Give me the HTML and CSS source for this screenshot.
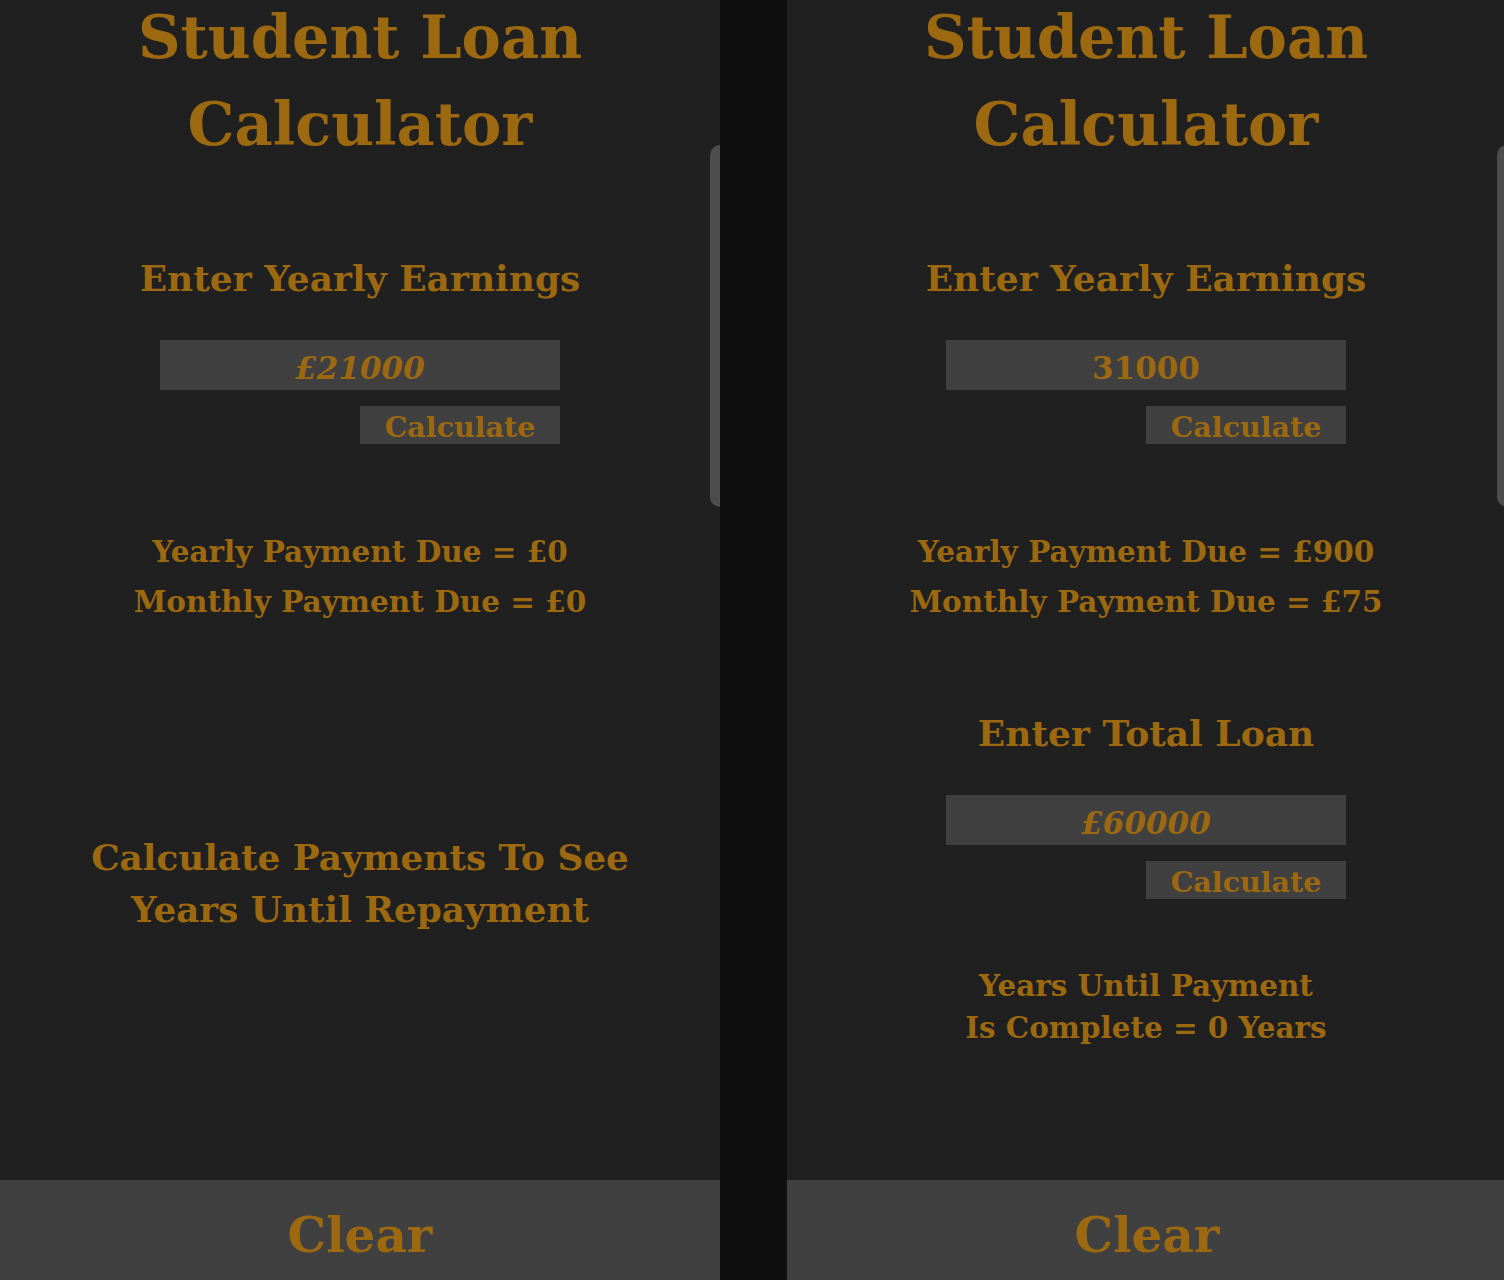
FILE: index.html
```html
<!DOCTYPE html>
<html lang="en">
<head>
<meta charset="utf-8">
<title>Student Loan Calculator</title>
<link rel="stylesheet" href="styles.css">
</head>
<body>
<div class="screens">
  <section class="screen">
    <div class="content">
      <h1 class="title">Student Loan<br>Calculator</h1>
      <h2 class="label">Enter Yearly Earnings</h2>
      <div class="field"><input class="input" type="text" placeholder="£21000"></div>
      <div class="action"><button class="calc">Calculate</button></div>
      <div class="results">
        <p>Yearly Payment Due = £0</p>
        <p>Monthly Payment Due = £0</p>
      </div>
      <p class="hint">Calculate Payments To See<br>Years Until Repayment</p>
    </div>
    <button class="clear">Clear</button>
    <div class="thumb"></div>
  </section>
  <section class="screen">
    <div class="content">
      <h1 class="title">Student Loan<br>Calculator</h1>
      <h2 class="label">Enter Yearly Earnings</h2>
      <div class="field"><input class="input" type="text" value="31000"></div>
      <div class="action"><button class="calc">Calculate</button></div>
      <div class="results">
        <p>Yearly Payment Due = £900</p>
        <p>Monthly Payment Due = £75</p>
      </div>
      <h2 class="label label-loan">Enter Total Loan</h2>
      <div class="field"><input class="input" type="text" placeholder="£60000"></div>
      <div class="action"><button class="calc">Calculate</button></div>
      <p class="years">Years Until Payment<br>Is Complete = 0 Years</p>
    </div>
    <button class="clear">Clear</button>
    <div class="thumb"></div>
  </section>
</div>
</body>
</html>
```
FILE: styles.css
```css
* { box-sizing: border-box; }
html, body { margin: 0; padding: 0; }
body {
  background: #0f0f0f;
  font-family: "DejaVu Serif", "Liberation Serif", serif;
  color: #9c6911;
  overflow: hidden;
}
.screens {
  display: flex;
  gap: 67px;
  width: 1504px;
  height: 1280px;
  overflow: hidden;
}
.screen {
  position: relative;
  flex: 0 0 720px;
  height: 1280px;
  background: #202020;
  display: flex;
  flex-direction: column;
  overflow: hidden;
}
.screen + .screen .content { margin-left: -2px; }
.content {
  flex: 1;
  display: flex;
  flex-direction: column;
  align-items: center;
}
.title {
  margin: -6px 0 0;
  font-size: 59px;
  line-height: 87px;
  font-weight: bold;
  text-align: center;
}
.label {
  margin: 88px 0 0;
  font-size: 36px;
  line-height: 44px;
  font-weight: bold;
  text-align: center;
}
.label-loan { margin-top: 84px; }
.field { margin-top: 40px; }
.input {
  display: block;
  width: 400px;
  height: 50px;
  border: 0;
  outline: 0;
  background: #404040;
  color: #9c6911;
  font-family: inherit;
  font-weight: bold;
  font-size: 31px;
  text-align: center;
  padding: 6px 0 0;
}
.input::placeholder {
  color: #9c6911;
  font-style: italic;
  opacity: 1;
}
.action {
  width: 400px;
  display: flex;
  justify-content: flex-end;
  margin-top: 16px;
}
.calc {
  width: 200px;
  height: 38px;
  border: 0;
  background: #404040;
  color: #9c6911;
  font-family: inherit;
  font-weight: bold;
  font-size: 28.5px;
  padding: 4px 0 0;
}
.results {
  margin-top: 83px;
  text-align: center;
  font-weight: bold;
  font-size: 29.5px;
  line-height: 50px;
}
.results p { margin: 0; }
.hint {
  margin: 204px 0 0;
  text-align: center;
  font-weight: bold;
  font-size: 35.8px;
  line-height: 52px;
}
.years {
  margin: 66px 0 0;
  text-align: center;
  font-weight: bold;
  font-size: 29.4px;
  line-height: 42px;
}
.clear {
  flex: 0 0 100px;
  width: 100%;
  border: 0;
  background: #404040;
  color: #9c6911;
  font-family: inherit;
  font-weight: bold;
  font-size: 48.5px;
  padding: 8px 0 0;
}
.thumb {
  position: absolute;
  right: 0;
  top: 145px;
  width: 10px;
  height: 362px;
  background: #4d4d4d;
  border-radius: 10px 0 0 10px;
}
```
